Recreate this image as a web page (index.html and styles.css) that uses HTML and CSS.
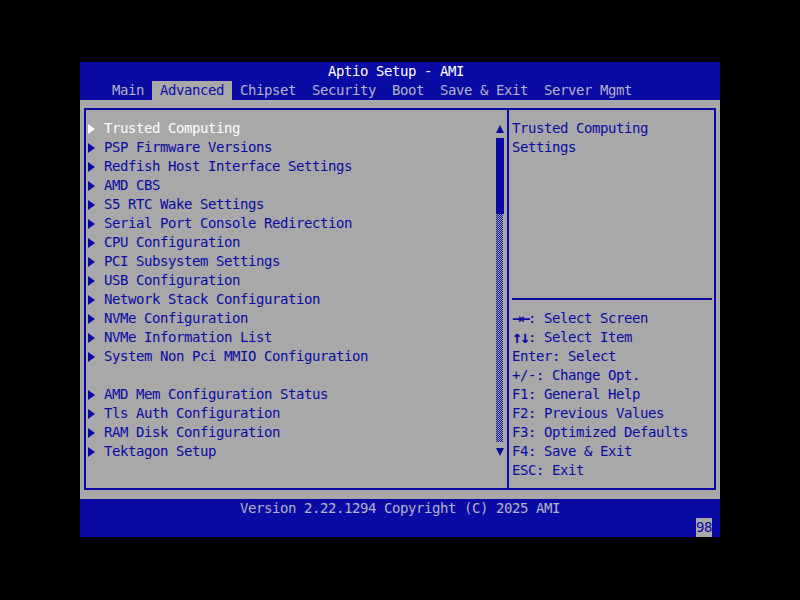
FILE: index.html
```html
<!DOCTYPE html>
<html lang="en">
<head>
  <meta charset="UTF-8">
  <meta name="viewport" content="width=device-width, initial-scale=1.0">
  <title>Aptio Setup - AMI</title>
  <link rel="stylesheet" href="styles.css">
</head>
<body>
  <div class="bios">
    <div class="title">Aptio Setup - AMI</div>

    <nav class="tabs">
      <span class="tab">Main</span>
      <span class="tab active">Advanced</span>
      <span class="tab">Chipset</span>
      <span class="tab">Security</span>
      <span class="tab">Boot</span>
      <span class="tab">Save &amp; Exit</span>
      <span class="tab">Server Mgmt</span>
    </nav>

    <div class="body">
      <div class="frame">
        <div class="menu-pane">
          <ul class="menu">
            <li class="item selected"><span class="arrow"></span>Trusted Computing</li>
            <li class="item"><span class="arrow"></span>PSP Firmware Versions</li>
            <li class="item"><span class="arrow"></span>Redfish Host Interface Settings</li>
            <li class="item"><span class="arrow"></span>AMD CBS</li>
            <li class="item"><span class="arrow"></span>S5 RTC Wake Settings</li>
            <li class="item"><span class="arrow"></span>Serial Port Console Redirection</li>
            <li class="item"><span class="arrow"></span>CPU Configuration</li>
            <li class="item"><span class="arrow"></span>PCI Subsystem Settings</li>
            <li class="item"><span class="arrow"></span>USB Configuration</li>
            <li class="item"><span class="arrow"></span>Network Stack Configuration</li>
            <li class="item"><span class="arrow"></span>NVMe Configuration</li>
            <li class="item"><span class="arrow"></span>NVMe Information List</li>
            <li class="item"><span class="arrow"></span>System Non Pci MMIO Configuration</li>
            <li class="item blank"></li>
            <li class="item"><span class="arrow"></span>AMD Mem Configuration Status</li>
            <li class="item"><span class="arrow"></span>Tls Auth Configuration</li>
            <li class="item"><span class="arrow"></span>RAM Disk Configuration</li>
            <li class="item"><span class="arrow"></span>Tektagon Setup</li>
          </ul>

          <div class="scrollbar">
            <div class="scroll-btn"><span class="tri-up"></span></div>
            <div class="thumb"></div>
            <div class="track"></div>
            <div class="scroll-btn"><span class="tri-down"></span></div>
          </div>
        </div>

        <div class="help-pane">
          <div class="help-desc">
            <div class="line">Trusted Computing</div>
            <div class="line">Settings</div>
          </div>
          <div class="help-rule"></div>
          <div class="keys">
            <div class="line"><b>&rarr;&larr;</b>: Select Screen</div>
            <div class="line"><b>&uarr;&darr;</b>: Select Item</div>
            <div class="line">Enter: Select</div>
            <div class="line">+/-: Change Opt.</div>
            <div class="line">F1: General Help</div>
            <div class="line">F2: Previous Values</div>
            <div class="line">F3: Optimized Defaults</div>
            <div class="line">F4: Save &amp; Exit</div>
            <div class="line">ESC: Exit</div>
          </div>
        </div>
      </div>
    </div>

    <div class="footer">
      <div class="version">Version 2.22.1294 Copyright (C) 2025 AMI</div>
      <div class="footer-row"><span class="badge">98</span></div>
    </div>
  </div>
</body>
</html>
```

FILE: styles.css
```css
body {
  margin: 0;
  background-color: #000;
  font-family: "DejaVu Sans Mono", "Liberation Mono", monospace;
  font-size: 14px;
  letter-spacing: -0.43px;
  line-height: 19px;
}
.bios {
  width: 640px;
  margin: 62px auto 0;
}
.title {
  height: 19px;
  padding-left: 248px;
  background-color: #0a0aa4;
  color: #fff;
}
.tabs {
  display: flex;
  height: 19px;
  padding-left: 24px;
  background-color: #0a0aa4;
}
.tab {
  padding: 0 8px;
  color: #b4b4c8;
  white-space: pre;
}
.tab.active {
  background-color: #a8a8a8;
  color: #0a0aa4;
}
.body {
  height: 399px;
  box-sizing: border-box;
  padding: 8px 4px 9px 4px;
  background-color: #a8a8a8;
}
.frame {
  display: flex;
  height: 100%;
  box-sizing: border-box;
  border: 2px solid #0a0aa4;
}
.menu-pane {
  display: flex;
  width: 423px;
  box-sizing: border-box;
  padding: 9px 0 0 2px;
  border-right: 2px solid #0a0aa4;
}
.menu {
  width: 408px;
  margin: 0;
  padding: 0;
  list-style: none;
}
.item {
  display: flex;
  align-items: center;
  height: 19px;
  color: #0a0aa4;
  white-space: pre;
}
.item.selected {
  color: #fff;
}
.arrow {
  width: 0;
  height: 0;
  margin-right: 9px;
  border-left: 7px solid #0a0aa4;
  border-top: 5px solid transparent;
  border-bottom: 5px solid transparent;
}
.selected .arrow {
  border-left-color: #fff;
}
.scrollbar {
  display: flex;
  flex-direction: column;
  width: 8px;
  margin-right: 3px;
}
.scroll-btn {
  display: flex;
  align-items: center;
  justify-content: center;
  height: 19px;
}
.tri-up, .tri-down {
  width: 0;
  height: 0;
  border-left: 4px solid transparent;
  border-right: 4px solid transparent;
}
.tri-up {
  border-bottom: 8px solid #0a0aa4;
}
.tri-down {
  border-top: 8px solid #0a0aa4;
}
.thumb {
  height: 76px;
  background-color: #0a0aa4;
}
.track {
  height: 228px;
  margin-right: 1px;
  background: repeating-conic-gradient(#0a0aa4 0 25%, transparent 0 50%) 0 0 / 2px 2px;
}
.help-pane {
  flex: 1;
  padding: 9px 2px 0 3px;
  color: #0a0aa4;
}
.help-desc {
  height: 171px;
}
.line {
  height: 19px;
  white-space: pre;
}
.help-rule {
  margin: 8px 0 9px;
  border-top: 2px solid #0a0aa4;
}
.keys b {
  display: inline-block;
  width: 16px;
  font-size: 17px;
  letter-spacing: -2.2px;
  font-weight: bold;
  line-height: 19px;
  vertical-align: top;
}
.footer {
  background-color: #0a0aa4;
}
.version {
  height: 19px;
  text-align: center;
  color: #b4b4c8;
}
.footer-row {
  display: flex;
  justify-content: flex-end;
  height: 19px;
  padding-right: 8px;
}
.badge {
  width: 16px;
  background-color: #a8a8a8;
  color: #0a0aa4;
}
```
